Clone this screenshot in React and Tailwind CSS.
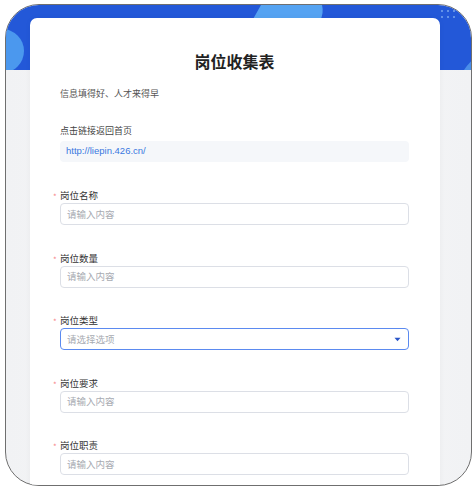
import React from "react";

const font = { fontFamily: '"Noto Sans CJK SC", "Noto Sans", sans-serif' };

function Field({ label, select, first }) {
  return (
    <div className={first ? "mt-[26px]" : "mt-[25.5px]"}>
      <div className="flex items-center h-[14px] text-[9.5px] leading-[14px] text-[#333]">
        <span className="-ml-[7px] w-[7px] h-[14px] flex items-center">
          <span className="block text-[#f78989] text-[8px] leading-[8px] translate-y-[2px]">*</span>
        </span>
        <span>{label}</span>
      </div>
      <div
        className={
          "mt-[1px] h-[22px] rounded-[4px] border flex items-center justify-between px-[6px] text-[9.5px] text-[#a8abb2] " +
          (select ? "border-[#5b8af0]" : "border-[#dcdfe6]")
        }
      >
        <span>{select ? "请选择选项" : "请输入内容"}</span>
        {select && (
          <svg width="7" height="5" viewBox="0 0 7 5" className="mr-[1px]">
            <path d="M0.5 0.8 L6.5 0.8 L3.5 4.2 Z" fill="#2a55c8" />
          </svg>
        )}
      </div>
    </div>
  );
}

export default function App() {
  return (
    <div className="w-[476px] h-[490px] bg-white pt-[4px] pl-[5px]" style={font}>
      <div className="relative w-[467px] h-[482px] rounded-[34px] border border-[#6f6f6f] overflow-hidden bg-gradient-to-r from-[#f1f2f4] via-[#f8f8f9] to-[#f1f2f4]">
        <div className="relative h-[65px] bg-[#2358d8] overflow-hidden">
          <svg className="absolute left-0 top-0" width="467" height="65" viewBox="0 0 467 65">
            <circle cx="-4" cy="46" r="22" fill="#4b98ee" />
            <path d="M255 0 L316 0 Q318 8 314 16 L246 16 Z" fill="#55a3f2" />
            <circle cx="492" cy="86" r="40" fill="#4a8ee9" />
            <g fill="#7aa6ee">
              <circle cx="436" cy="6" r="1" />
              <circle cx="442" cy="6" r="1" />
              <circle cx="448" cy="6" r="1" />
              <circle cx="436" cy="12" r="1" />
              <circle cx="442" cy="12" r="1" />
              <circle cx="448" cy="12" r="1" />
            </g>
          </svg>
        </div>
        <div className="relative -mt-[52px] ml-[24px] w-[410px] bg-white rounded-[7px] pt-[32px] pl-[30px] pr-[31px] pb-[40px] shadow-[0_0_6px_rgba(0,0,0,0.04)]">
          <div className="text-center text-[16px] leading-[22px] font-bold text-[#222]">岗位收集表</div>
          <div className="mt-[15px] text-[9px] leading-[14px] text-[#555]">信息填得好、人才来得早</div>
          <div className="mt-[23px] text-[9px] leading-[14px] text-[#444]">点击链接返回首页</div>
          <div className="mt-[3px] h-[21px] rounded-[4px] bg-[#f5f7fa] flex items-center px-[6px] text-[9.5px] text-[#3a78e0]" style={{ fontFamily: '"Liberation Sans", sans-serif' }}>
            http://liepin.426.cn/
          </div>
          <Field label="岗位名称" first />
          <Field label="岗位数量" />
          <Field label="岗位类型" select />
          <Field label="岗位要求" />
          <Field label="岗位职责" />
        </div>
      </div>
    </div>
  );
}
